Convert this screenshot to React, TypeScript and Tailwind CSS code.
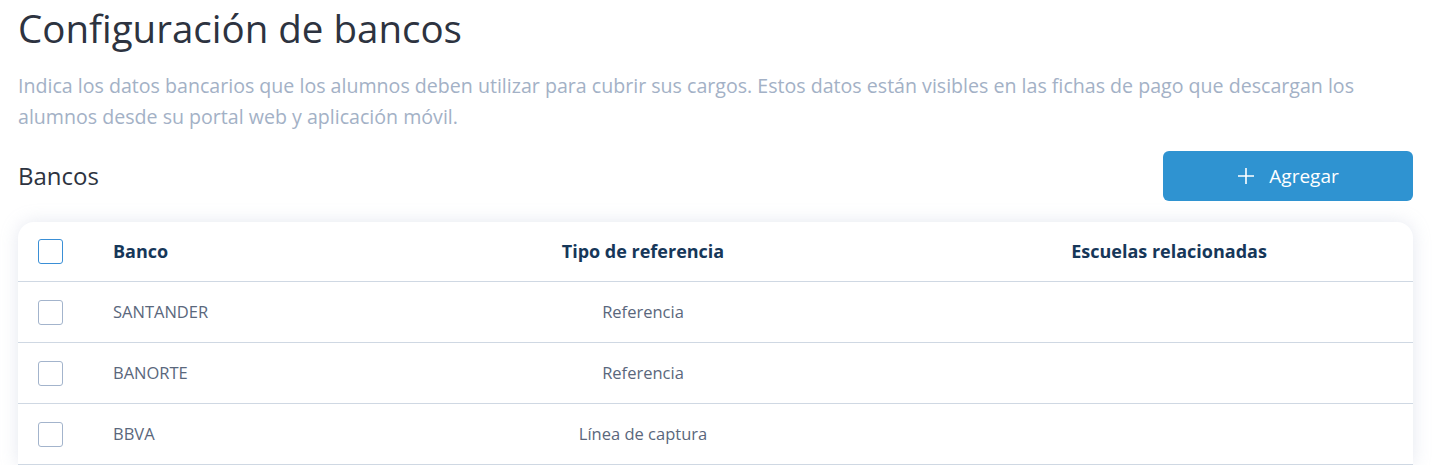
import React from 'react';

interface BankRow {
  id: number;
  name: string;
  referenceType: string;
  schools: string;
}

const banks: BankRow[] = [
  { id: 1, name: 'SANTANDER', referenceType: 'Referencia', schools: '' },
  { id: 2, name: 'BANORTE', referenceType: 'Referencia', schools: '' },
  { id: 3, name: 'BBVA', referenceType: 'Línea de captura', schools: '' },
];

const Checkbox: React.FC<{ header?: boolean }> = ({ header = false }) => (
  <span
    className={`block h-[25px] w-[25px] rounded-[3px] border bg-white ${
      header ? 'border-[#3a8fd6]' : 'border-[#a3b4cc]'
    }`}
  />
);

const App: React.FC = () => {
  return (
    <div className="min-h-screen bg-white pl-[18px] pr-[20px] pt-[2px] font-['Open_Sans',sans-serif]">
      <h1 className="text-[38.5px] leading-[52px] text-[#2d3340]">Configuración de bancos</h1>

      <p className="mt-[16px] text-[19.6px] leading-[31px] text-[#a3b1c6]">
        Indica los datos bancarios que los alumnos deben utilizar para cubrir sus cargos. Estos datos están visibles en las fichas de pago que descargan los
        <br />
        alumnos desde su portal web y aplicación móvil.
      </p>

      <div className="mt-[19px] flex items-center justify-between">
        <h2 className="text-[24px] text-[#2d3340]">Bancos</h2>
        <button className="flex h-[50px] w-[250px] items-center justify-center gap-[14px] rounded-[6px] bg-[#2f93d1] text-[19px] font-medium text-white">
          <svg width="18" height="18" viewBox="0 0 18 18" fill="none" stroke="currentColor" strokeWidth="1.6">
            <path d="M9 1v16M1 9h16" />
          </svg>
          Agregar
        </button>
      </div>

      <div className="mt-[21px] overflow-hidden rounded-t-[16px] bg-white shadow-[0_0_18px_rgba(160,174,200,0.28)]">
        <div className="grid h-[60px] grid-cols-[95px_248px_564px_1fr] items-center border-b border-[#cfd8e3] text-[18px] font-bold text-[#163759]">
          <div className="pl-[20px]">
            <Checkbox header />
          </div>
          <div>Banco</div>
          <div className="text-center">Tipo de referencia</div>
          <div className="text-center">Escuelas relacionadas</div>
        </div>

        {banks.map((bank) => (
          <div
            key={bank.id}
            className="grid h-[61px] grid-cols-[95px_248px_564px_1fr] items-center border-b border-[#cfd8e3] text-[16.5px] text-[#5a677c]"
          >
            <div className="pl-[20px]">
              <Checkbox />
            </div>
            <div>{bank.name}</div>
            <div className="text-center">{bank.referenceType}</div>
            <div className="text-center">{bank.schools}</div>
          </div>
        ))}
      </div>
    </div>
  );
};

export default App;
